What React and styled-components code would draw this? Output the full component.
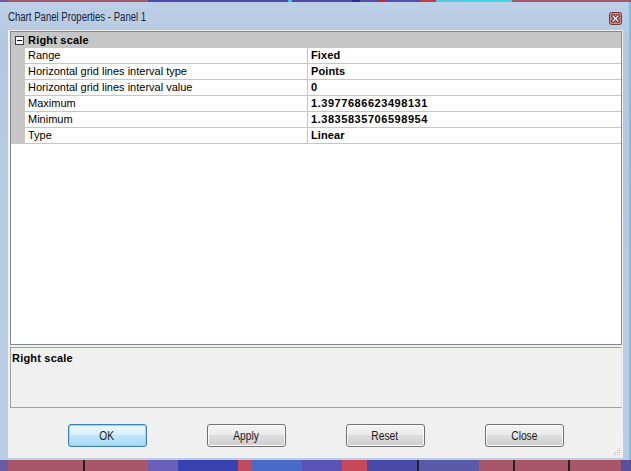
import styled, { createGlobalStyle } from 'styled-components';

const GlobalStyle = createGlobalStyle`
  html, body {
    margin: 0;
    padding: 0;
    background: #5a4f9a;
  }
  body {
    font-family: 'Liberation Sans', Arial, sans-serif;
  }
`;

const Screen = styled.div`
  width: 631px;
  height: 471px;
  display: flex;
  flex-direction: column;
  overflow: hidden;
`;

// desktop showing behind the dialog, above and below it
const Strip = styled.div`
  height: ${(p) => p.$h}px;
  display: flex;
  flex-shrink: 0;
`;

const StripPiece = styled.div`
  width: ${(p) => p.$w}px;
  background: ${(p) => p.$c};
  flex-shrink: 0;
`;

const Window = styled.div`
  flex: 1;
  display: flex;
  flex-direction: column;
  padding: 0 6px 2px 8px;
  background: linear-gradient(#bdd0e7, #b4c8e1 40px, #b9cde4);
  border-right: 2px solid #6cc6ec;
`;

const TitleBar = styled.div`
  height: 28px;
  display: flex;
  align-items: center;
  justify-content: space-between;
  padding-right: 1px;
`;

const Title = styled.span`
  display: inline-block;
  font-family: 'Liberation Sans', Arial, sans-serif;
  font-size: 12px;
  color: #15243a;
  transform: scaleX(0.8);
  transform-origin: left center;
  white-space: nowrap;
  margin-top: 2px;
`;

const CloseBox = styled.div`
  width: 13px;
  height: 13px;
  margin-top: 4px;
  display: flex;
`;

const Client = styled.div`
  flex: 1;
  background: #f0f0f0;
  display: flex;
  flex-direction: column;
  padding: 1px 1px 0 2px;
  position: relative;
`;

const Grid = styled.div`
  height: 314px;
  box-sizing: border-box;
  border: 1px solid #828790;
  background: #fff;
  display: flex;
  flex-direction: column;
  font-size: 11px;
`;

const Row = styled.div`
  height: 16px;
  display: flex;
  flex-shrink: 0;
  background: ${(p) => (p.$category ? '#c6c6c6' : '#fff')};
`;

const Gutter = styled.div`
  width: 14px;
  background: #c6c6c6;
  flex-shrink: 0;
  display: flex;
  align-items: center;
  justify-content: center;
`;

const Toggle = styled.div`
  width: 7px;
  height: 7px;
  border: 1px solid #3a3a3a;
  background: #f8f8f8;
  display: flex;
  align-items: center;
  justify-content: center;
  margin-left: 2px;

  &::after {
    content: '';
    width: 5px;
    height: 1px;
    background: #000;
  }
`;

const CategoryLabel = styled.div`
  padding-left: 3px;
  font-weight: bold;
  letter-spacing: 0.2px;
  line-height: 16px;
  color: #000;
`;

const NameCell = styled.div`
  width: 283px;
  flex-shrink: 0;
  box-sizing: border-box;
  padding-left: 3px;
  line-height: 15px;
  border-right: 1px solid #c6c6c6;
  border-bottom: 1px solid #c6c6c6;
  color: #000;
  white-space: nowrap;
`;

const ValueCell = styled.div`
  flex: 1;
  box-sizing: border-box;
  padding-left: 3px;
  line-height: 15px;
  border-bottom: 1px solid #c6c6c6;
  font-weight: bold;
  letter-spacing: ${(p) => (p.$numeric ? '0.55px' : '0.1px')};
  color: #000;
  white-space: nowrap;
`;

const Description = styled.div`
  margin-top: 2px;
  height: 61px;
  box-sizing: border-box;
  border-top: 1px solid #a0a0a0;
  border-left: 1px solid #a0a0a0;
  border-bottom: 1px solid #a0a0a0;
  border-right: 1px solid #e3e3e3;
  padding: 4px 0 0 1px;
  font-size: 11px;
  font-weight: bold;
  letter-spacing: 0.2px;
  color: #000;
`;

const ButtonRow = styled.div`
  display: flex;
  justify-content: center;
  gap: 60px;
  margin-top: 16px;
  padding-right: 1px;
`;

const Button = styled.button`
  width: 79px;
  height: 23px;
  box-sizing: border-box;
  border: 1px solid ${(p) => (p.$default ? '#3c7fb1' : '#707070')};
  border-radius: 3px;
  background: ${(p) =>
    p.$default
      ? 'linear-gradient(#eaf6fd 0%, #d9f0fc 49%, #bee6fd 50%, #a7d9f5 100%)'
      : 'linear-gradient(#f2f2f2 0%, #ebebeb 49%, #dddddd 50%, #cfcfcf 100%)'};
  box-shadow: inset 0 0 0 1px ${(p) => (p.$default ? '#9ed3ee' : '#fcfcfc')};
  font-family: 'Liberation Sans', Arial, sans-serif;
  font-size: 12px;
  color: #1a1a1a;
  padding: 0;

  span {
    display: inline-block;
    transform: scaleX(0.85);
  }
`;

const Grip = styled.div`
  position: absolute;
  right: 2px;
  bottom: 2px;
  width: 8px;
  height: 8px;
  display: flex;
`;

const rows = [
  ['Range', 'Fixed'],
  ['Horizontal grid lines interval type', 'Points'],
  ['Horizontal grid lines interval value', '0'],
  ['Maximum', '1.3977686623498131', true],
  ['Minimum', '1.3835835706598954', true],
  ['Type', 'Linear'],
];

const topStrip = [
  [8, '#6a5aa0'],
  [140, '#a9566b'],
  [140, '#4c4aa6'],
  [4, '#2ec8ee'],
  [60, '#5048a8'],
  [8, '#2a2a90'],
  [20, '#5a4fa6'],
  [6, '#d02030'],
  [34, '#5450a8'],
  [16, '#c63d4a'],
  [26, '#52c8e6'],
  [50, '#3ed6e8'],
  [119, '#a9566b'],
];

const bottomStrip = [
  [8, '#6a5aa0'],
  [75, '#a9566b'],
  [2, '#222'],
  [63, '#a9566b'],
  [30, '#6a60b8'],
  [60, '#3842b0'],
  [14, '#c04a60'],
  [50, '#4a6ac8'],
  [40, '#5a52b4'],
  [25, '#c84a5a'],
  [50, '#4a4aa6'],
  [2, '#222'],
  [60, '#5a5aa8'],
  [34, '#a9566b'],
  [2, '#222'],
  [53, '#a9566b'],
  [2, '#222'],
  [51, '#a9566b'],
];

function App() {
  return (
    <Screen>
      <GlobalStyle />
      <Strip $h={2}>
        {topStrip.map(([w, c], i) => (
          <StripPiece key={i} $w={w} $c={c} />
        ))}
      </Strip>
      <Window>
        <TitleBar>
          <Title>Chart Panel Properties - Panel 1</Title>
          <CloseBox>
            <svg width="13" height="13" viewBox="0 0 13 13">
              <rect x="0.5" y="0.5" width="12" height="12" rx="2" fill="#d9a3a3" stroke="#6d3a3a" />
              <rect x="1.5" y="1.5" width="10" height="10" rx="1" fill="#c87070" />
              <path d="M4 4 L9 9 M9 4 L4 9" stroke="#3a1a1a" strokeWidth="3" strokeLinecap="square" />
              <path d="M4 4 L9 9 M9 4 L4 9" stroke="#ffffff" strokeWidth="1.4" strokeLinecap="square" />
            </svg>
          </CloseBox>
        </TitleBar>
        <Client>
          <Grid>
            <Row $category>
              <Gutter>
                <Toggle />
              </Gutter>
              <CategoryLabel>Right scale</CategoryLabel>
            </Row>
            {rows.map(([name, value, numeric]) => (
              <Row key={name}>
                <Gutter />
                <NameCell>{name}</NameCell>
                <ValueCell $numeric={numeric}>{value}</ValueCell>
              </Row>
            ))}
          </Grid>
          <Description>Right scale</Description>
          <ButtonRow>
            <Button $default>
              <span>OK</span>
            </Button>
            <Button>
              <span>Apply</span>
            </Button>
            <Button>
              <span>Reset</span>
            </Button>
            <Button>
              <span>Close</span>
            </Button>
          </ButtonRow>
          <Grip>
            <svg width="8" height="8" viewBox="0 0 8 8">
              <g fill="#b8b8b8">
                <rect x="6" y="0" width="1" height="1" />
                <rect x="4" y="2" width="1" height="1" />
                <rect x="6" y="2" width="1" height="1" />
                <rect x="2" y="4" width="1" height="1" />
                <rect x="4" y="4" width="1" height="1" />
                <rect x="6" y="4" width="1" height="1" />
                <rect x="0" y="6" width="1" height="1" />
                <rect x="2" y="6" width="1" height="1" />
                <rect x="4" y="6" width="1" height="1" />
                <rect x="6" y="6" width="1" height="1" />
              </g>
            </svg>
          </Grip>
        </Client>
      </Window>
      <Strip $h={11}>
        {bottomStrip.map(([w, c], i) => (
          <StripPiece key={i} $w={w} $c={c} />
        ))}
      </Strip>
    </Screen>
  );
}

export default App;
